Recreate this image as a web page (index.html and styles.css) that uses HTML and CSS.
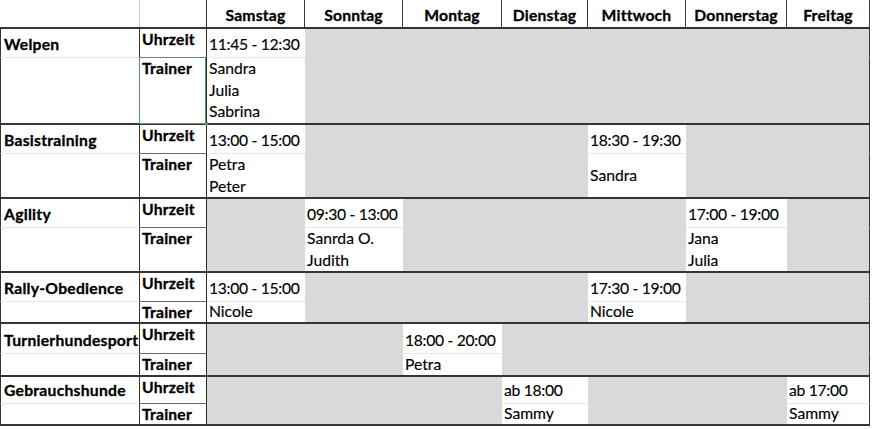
FILE: index.html
```html
<!DOCTYPE html>
<html lang="de">
<head>
<meta charset="utf-8">
<title>Trainingsplan</title>
<link rel="stylesheet" href="styles.css">
</head>
<body>
<div class="sheet">
  <div class="head">
    <div class="c h ha"></div>
    <div class="c h hb"></div>
    <div class="c h">Samstag</div>
    <div class="c h">Sonntag</div>
    <div class="c h">Montag</div>
    <div class="c h">Dienstag</div>
    <div class="c h">Mittwoch</div>
    <div class="c h">Donnerstag</div>
    <div class="c h">Freitag</div>
  </div>

  <div class="grp g-welpen">
    <div class="c r1 lab">Welpen</div>
    <div class="c r1 sub">Uhrzeit</div>
    <div class="c r1 d">11:45 - 12:30</div>
    <div class="c r1 x"></div><div class="c r1 x"></div><div class="c r1 x"></div><div class="c r1 x"></div><div class="c r1 x"></div><div class="c r1 x fr"></div>
    <div class="c r2 lab"></div>
    <div class="c r2 sub sel">Trainer</div>
    <div class="c r2 d">Sandra<br>Julia<br>Sabrina</div>
    <div class="c r2 x"></div><div class="c r2 x"></div><div class="c r2 x"></div><div class="c r2 x"></div><div class="c r2 x"></div><div class="c r2 x fr"></div>
  </div>

  <div class="grp g-basis">
    <div class="c r1 lab">Basistraining</div>
    <div class="c r1 sub">Uhrzeit</div>
    <div class="c r1 d">13:00 - 15:00</div>
    <div class="c r1 x"></div><div class="c r1 x"></div><div class="c r1 x"></div>
    <div class="c r1 d">18:30 - 19:30</div>
    <div class="c r1 x"></div><div class="c r1 x fr"></div>
    <div class="c r2 lab"></div>
    <div class="c r2 sub">Trainer</div>
    <div class="c r2 d">Petra<br>Peter</div>
    <div class="c r2 x"></div><div class="c r2 x"></div><div class="c r2 x"></div>
    <div class="c r2 d">Sandra</div>
    <div class="c r2 x"></div><div class="c r2 x fr"></div>
  </div>

  <div class="grp g-agility">
    <div class="c r1 lab">Agility</div>
    <div class="c r1 sub">Uhrzeit</div>
    <div class="c r1 x"></div>
    <div class="c r1 d">09:30 - 13:00</div>
    <div class="c r1 x"></div><div class="c r1 x"></div><div class="c r1 x"></div>
    <div class="c r1 d">17:00 - 19:00</div>
    <div class="c r1 x fr"></div>
    <div class="c r2 lab"></div>
    <div class="c r2 sub">Trainer</div>
    <div class="c r2 x"></div>
    <div class="c r2 d">Sanrda O.<br>Judith</div>
    <div class="c r2 x"></div><div class="c r2 x"></div><div class="c r2 x"></div>
    <div class="c r2 d">Jana<br>Julia</div>
    <div class="c r2 x fr"></div>
  </div>

  <div class="grp g-rally">
    <div class="c r1 lab">Rally-Obedience</div>
    <div class="c r1 sub">Uhrzeit</div>
    <div class="c r1 d">13:00 - 15:00</div>
    <div class="c r1 x"></div><div class="c r1 x"></div><div class="c r1 x"></div>
    <div class="c r1 d">17:30 - 19:00</div>
    <div class="c r1 x"></div><div class="c r1 x fr"></div>
    <div class="c r2 lab"></div>
    <div class="c r2 sub">Trainer</div>
    <div class="c r2 d">Nicole</div>
    <div class="c r2 x"></div><div class="c r2 x"></div><div class="c r2 x"></div>
    <div class="c r2 d">Nicole</div>
    <div class="c r2 x"></div><div class="c r2 x fr"></div>
  </div>

  <div class="grp g-turnier">
    <div class="c r1 lab">Turnierhundesport</div>
    <div class="c r1 sub">Uhrzeit</div>
    <div class="c r1 x"></div><div class="c r1 x"></div>
    <div class="c r1 d">18:00 - 20:00</div>
    <div class="c r1 x"></div><div class="c r1 x"></div><div class="c r1 x"></div><div class="c r1 x fr"></div>
    <div class="c r2 lab"></div>
    <div class="c r2 sub">Trainer</div>
    <div class="c r2 x"></div><div class="c r2 x"></div>
    <div class="c r2 d">Petra</div>
    <div class="c r2 x"></div><div class="c r2 x"></div><div class="c r2 x"></div><div class="c r2 x fr"></div>
  </div>

  <div class="grp g-gebrauch">
    <div class="c r1 lab">Gebrauchshunde</div>
    <div class="c r1 sub">Uhrzeit</div>
    <div class="c r1 x"></div><div class="c r1 x"></div><div class="c r1 x"></div>
    <div class="c r1 d">ab 18:00</div>
    <div class="c r1 x"></div><div class="c r1 x"></div>
    <div class="c r1 d fr">ab 17:00</div>
    <div class="c r2 lab"></div>
    <div class="c r2 sub">Trainer</div>
    <div class="c r2 x"></div><div class="c r2 x"></div><div class="c r2 x"></div>
    <div class="c r2 d">Sammy</div>
    <div class="c r2 x"></div><div class="c r2 x"></div>
    <div class="c r2 d fr">Sammy</div>
  </div>
</div>
</body>
</html>
```

FILE: styles.css
```css
html, body {
  margin: 0;
  padding: 0;
  background: #ffffff;
}

body {
  font-family: Lato, "Liberation Sans", sans-serif;
  font-size: 15.7px;
  color: #000000;
}

.sheet {
  width: 870px;
}

.head,
.grp {
  display: grid;
  grid-template-columns: 140px 67px 98px 98px 99px 86px 98px 101px 83px;
  border-bottom: 2px solid #353535;
}

.head {
  grid-template-rows: 27px;
}

.g-welpen   { grid-template-rows: 29px 65px; }
.g-basis    { grid-template-rows: 29px 43px; }
.g-agility  { grid-template-rows: 29px 43px; }
.g-rally    { grid-template-rows: 29px 20px; }
.g-turnier  { grid-template-rows: 30px 21px; }
.g-gebrauch { grid-template-rows: 27px 20px; }

.c {
  box-sizing: border-box;
  display: flex;
  flex-direction: column;
  min-width: 0;
  min-height: 0;
  padding: 0 2px;
  line-height: 21.5px;
  white-space: nowrap;
  -webkit-text-stroke: 0.15px #000;
}

/* header */
.h {
  justify-content: flex-end;
  align-items: center;
  padding-bottom: 1px;
  font-weight: 700;
  letter-spacing: 0.2px;
  -webkit-text-stroke: 0.3px #000;
  border-right: 1px solid #3a3a3a;
}

.ha {
  border-right-color: #cfcfcf;
}

/* row parts */
.r1 {
  justify-content: flex-end;
  padding-bottom: 2px;
  border-bottom: 1px solid #e8e8e8;
}

.r2 {
  justify-content: center;
}

/* group label column */
.lab {
  font-weight: 700;
  letter-spacing: 0.25px;
  -webkit-text-stroke: 0.3px #000;
  padding-left: 3px;
  border-left: 1px solid #353535;
  border-right: 1px solid #353535;
}

/* Uhrzeit / Trainer column */
.sub {
  font-weight: 700;
  letter-spacing: 0.2px;
  -webkit-text-stroke: 0.3px #000;
  justify-content: flex-start;
  padding-bottom: 0;
  border-right: 1px solid #2a2a2a;
}

.r1.sub {
  border-bottom-color: #6a6a6a;
}

.r2.sub {
  justify-content: flex-start;
}

/* data cells */
.d {
  background: #ffffff;
}

.r1.d {
  letter-spacing: -0.3px;
}

.x {
  background: #d9d9d9;
  border-bottom-color: #d9d9d9;
}

.fr {
  border-right: 1px solid #353535;
}

/* active cell selection */
.sel {
  position: relative;
}

.sel::after {
  content: "";
  position: absolute;
  left: -1px;
  top: -1px;
  right: 0;
  bottom: -1px;
  border: 1px solid #4f9a6c;
  pointer-events: none;
}

.sel::before {
  content: "";
  position: absolute;
  right: -2px;
  bottom: -2px;
  width: 3px;
  height: 3px;
  background: #4f9a6c;
  z-index: 1;
}
```
